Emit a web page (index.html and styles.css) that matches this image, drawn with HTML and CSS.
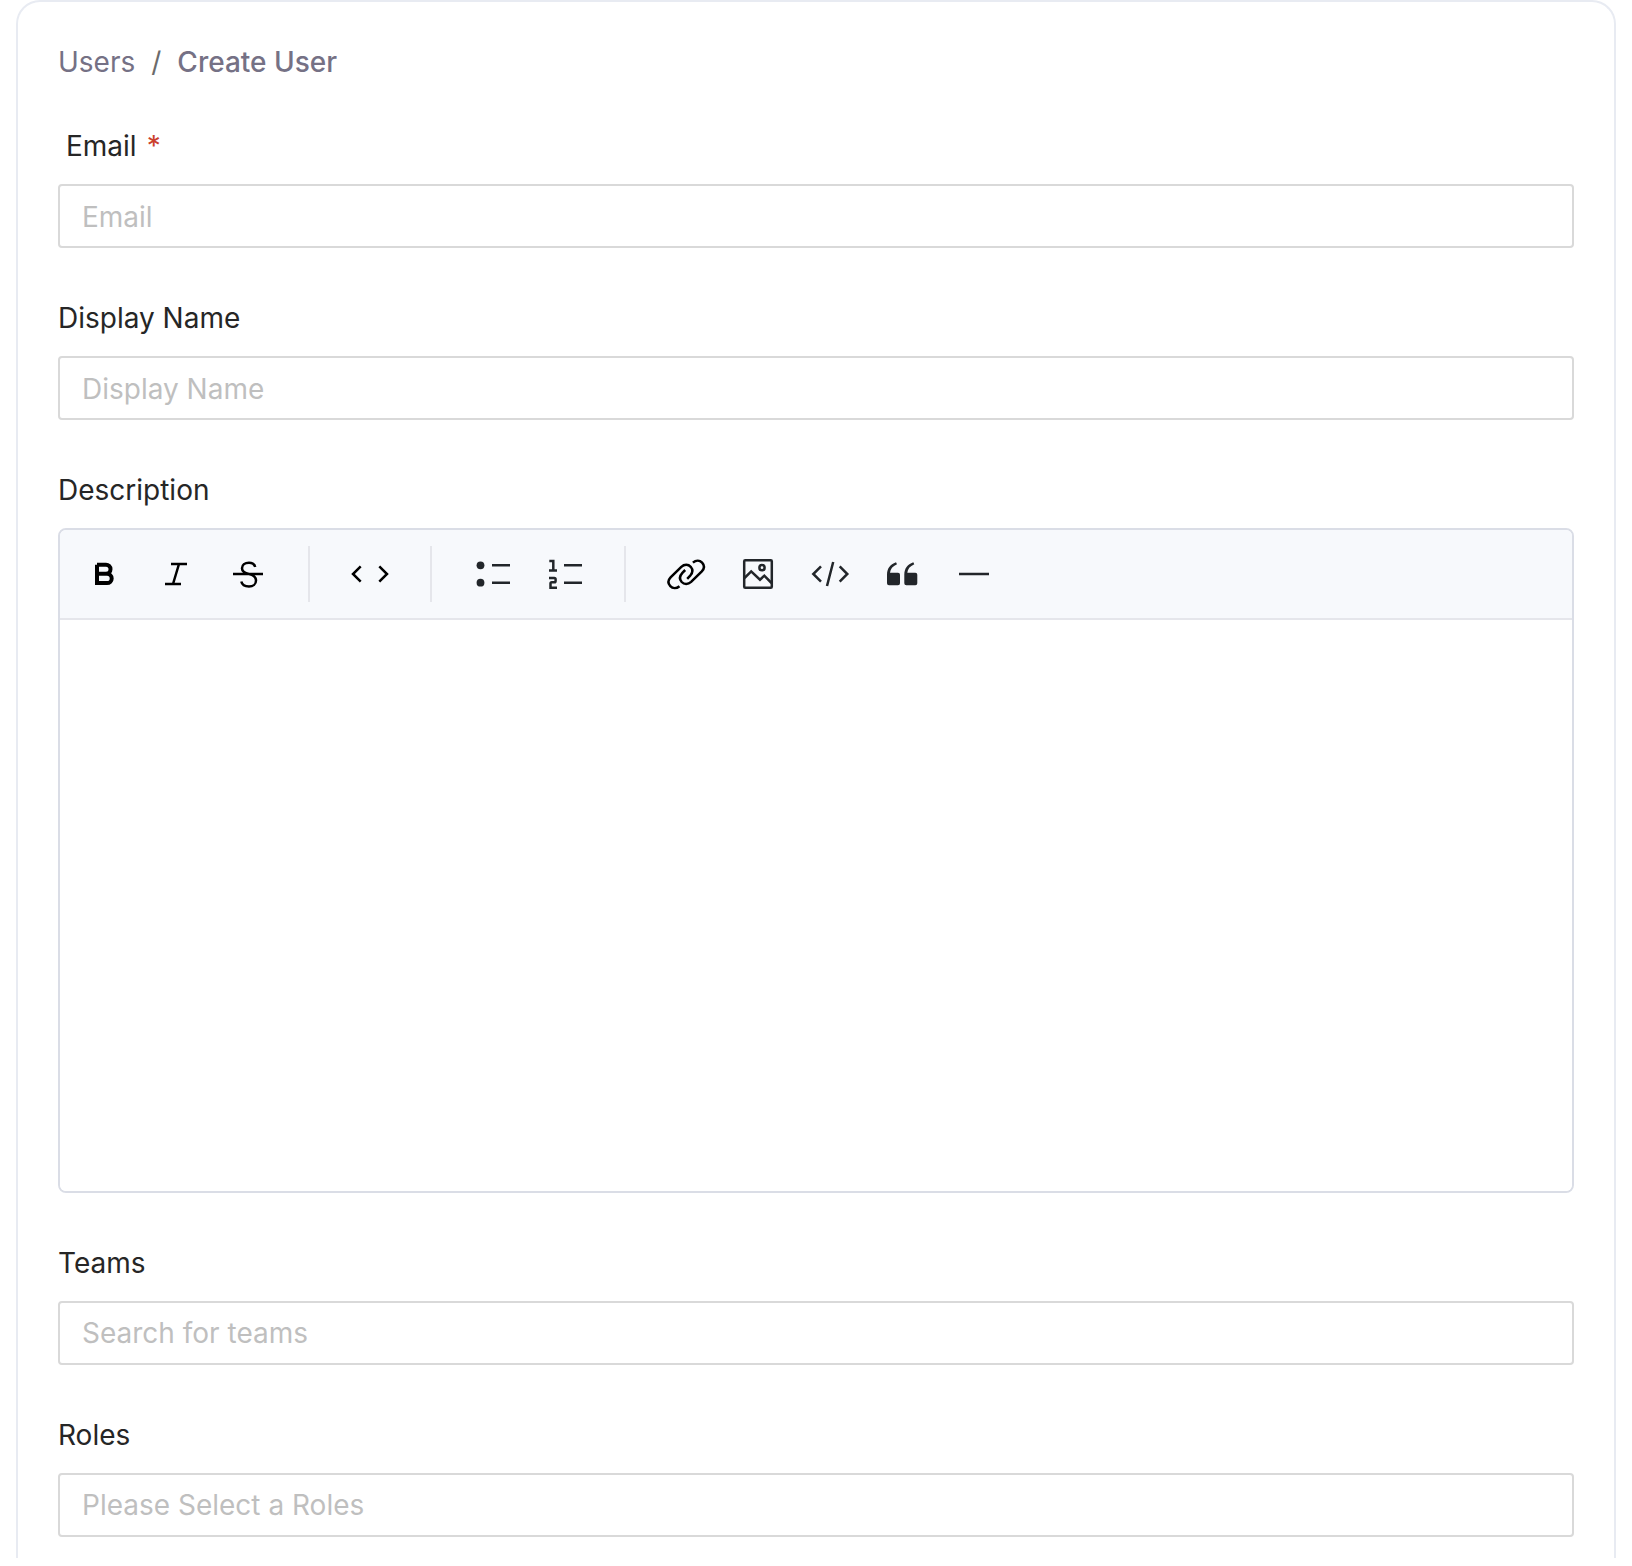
FILE: index.html
```html
<!DOCTYPE html>
<html lang="en">
<head>
<meta charset="utf-8">
<meta name="viewport" content="width=device-width, initial-scale=1">
<title>Create User</title>
<link rel="stylesheet" href="styles.css">
</head>
<body>
<main class="card">
  <nav class="breadcrumb" aria-label="Breadcrumb">
    <a class="breadcrumb-link" href="#users">Users</a>
    <span class="breadcrumb-separator">/</span>
    <span class="breadcrumb-current" aria-current="page">Create User</span>
  </nav>
  <form class="form">
    <div class="field">
      <label class="label label-required" for="email">Email<span class="required-mark">*</span></label>
      <input class="input input-text" id="email" type="email" placeholder="Email" required>
    </div>
    <div class="field">
      <label class="label" for="display-name">Display Name</label>
      <input class="input input-text" id="display-name" type="text" placeholder="Display Name">
    </div>
    <div class="field">
      <label class="label" for="description">Description</label>
      <div class="editor">
        <div class="toolbar" role="toolbar" aria-label="Formatting">
          <button class="tool" type="button" aria-label="Bold">
            <svg class="icon icon-strong" viewBox="0 0 64 64"><path stroke-width="4" d="M25 22.7H34a4.5 4.5 0 0 1 0 9H25M25 31.7H35a4.7 4.7 0 0 1 0 9.4H25V22.7" class="bold-stroke"/></svg>
          </button>
          <button class="tool" type="button" aria-label="Italic">
            <svg class="icon icon-strong" viewBox="0 0 64 64"><path d="M27 22H43M21 42H37M35 22L29 42"/></svg>
          </button>
          <button class="tool" type="button" aria-label="Strike">
            <svg class="icon icon-strong" viewBox="0 0 64 64"><path d="M17 32H47M39.2 25C38.5 22.3 36 20.7 33 20.7C28.8 20.7 26 23 26 26.2C26 29.5 29 31 33 32C38 33.2 40 35.2 40 38.4C40 42 37 44.5 33 44.5C29 44.5 26 42.7 25.3 39.5"/></svg>
          </button>
          <span class="divider"></span>
          <button class="tool" type="button" aria-label="Inline code">
            <svg class="icon icon-strong" viewBox="0 0 64 64"><path d="M22.7 24.3L15 32l7.7 7.7M41.3 24.3L49 32l-7.7 7.7"/></svg>
          </button>
          <span class="divider"></span>
          <button class="tool" type="button" aria-label="Unordered list">
            <svg class="icon" viewBox="0 0 64 64"><path d="M32 23.3H50M32 40.7H50"/><circle class="solid" cx="20.5" cy="23.3" r="3.9"/><circle class="solid" cx="20.5" cy="40.7" r="3.9"/></svg>
          </button>
          <button class="tool" type="button" aria-label="Ordered list">
            <svg class="icon" viewBox="0 0 64 64"><path d="M32 23.3H50M32 40.7H50M17.3 19H21.3V28.5M17 28.5H25M17 36H22.3q1.3 0 1.3 1.3V39q0 1.3-1.3 1.3h-2.5q-1.3 0-1.3 1.3V45.8H25"/></svg>
          </button>
          <span class="divider"></span>
          <button class="tool" type="button" aria-label="Insert link">
            <svg class="icon icon-strong" viewBox="0 0 64 64"><path id="link-half" d="M25.5 44.2C22.4 46.8 18.6 46.6 16.3 44.2C13.9 41.6 14 38.2 16.6 35.4L27.3 24.9C30.4 22 34.3 22.2 36.7 24.8C39.1 27.6 38.6 31.2 36 34L33.2 36.8"/><use href="#link-half" transform="rotate(180 32.2 32.4)"/></svg>
          </button>
          <button class="tool" type="button" aria-label="Insert image">
            <svg class="icon" viewBox="0 0 64 64"><rect x="18.2" y="18.2" width="27.6" height="27.6" rx="1"/><circle cx="36" cy="25.7" r="2.6"/><path d="M18.5 36L25.2 29.4L34 37.7L38.3 33.7L45.5 41"/></svg>
          </button>
          <button class="tool" type="button" aria-label="Insert code block">
            <svg class="icon" viewBox="0 0 64 64"><path d="M23 24.3L15.3 32l7.7 7.7M41.7 24.3L49.3 32l-7.6 7.7M35.2 20L29 44"/></svg>
          </button>
          <button class="tool" type="button" aria-label="Blockquote">
            <svg class="icon" viewBox="0 0 64 64"><path id="quote-mark" class="solid" d="M26 20.2L27 22.2C22.5 24.2 20.4 27 20 30.7H28a2 2 0 0 1 2 2V41.3a2 2 0 0 1-2 2H19a2 2 0 0 1-2-2V32.4C17 26.6 20 22.4 26 20.2Z"/><use href="#quote-mark" x="17.3"/></svg>
          </button>
          <button class="tool" type="button" aria-label="Horizontal line">
            <svg class="icon" viewBox="0 0 64 64"><path d="M17 32H47"/></svg>
          </button>
        </div>
        <textarea class="editor-text" id="description"></textarea>
      </div>
    </div>
    <div class="field">
      <label class="label" for="teams">Teams</label>
      <input class="input" id="teams" type="text" placeholder="Search for teams">
    </div>
    <div class="field">
      <label class="label" for="roles">Roles</label>
      <input class="input" id="roles" type="text" placeholder="Please Select a Roles">
    </div>
  </form>
</main>
</body>
</html>
```
FILE: styles.css
```css
* {
  box-sizing: border-box;
}

body {
  margin: 0;
  padding: 0 16px 8px;
  background: #fff;
  color: #262626;
  font: 400 28px/44px Inter, "Liberation Sans", sans-serif;
}

.card {
  padding: 40px 40px 21px;
  border: 2px solid #e8ebf2;
  border-bottom: 0;
  border-radius: 24px 24px 0 0;
}

.breadcrumb {
  display: flex;
  gap: 16px;
  margin-bottom: 42px;
  line-height: 40px;
  color: #757185;
}

.breadcrumb-link {
  color: inherit;
  text-decoration: none;
}

.breadcrumb-separator {
  color: #6b6b6b;
}

.breadcrumb-current {
  font-weight: 500;
}

.form {
  display: flex;
  flex-direction: column;
  gap: 48px;
}

.field {
  display: flex;
  flex-direction: column;
  gap: 16px;
}

.label-required {
  padding-left: 8px;
}

.required-mark {
  margin-left: 10px;
  color: #cb402d;
}

.input {
  width: 100%;
  height: 64px;
  padding: 0 22px;
  border: 2px solid #d9d9d9;
  border-radius: 4px;
  background: #fff;
  color: inherit;
  font: inherit;
}

.input-text {
  padding-top: 2px;
}

.input::placeholder {
  color: #bfbfbf;
  opacity: 1;
}

.editor {
  border: 2px solid #dadde6;
  border-radius: 8px;
  overflow: hidden;
}

.toolbar {
  display: flex;
  align-items: center;
  gap: 8px;
  padding: 12px;
  border-bottom: 2px solid #e5e6eb;
  background: #f7f9fc;
}

.tool {
  width: 64px;
  height: 64px;
  padding: 0;
  border: 0;
  background: none;
  color: #22262a;
}

.icon {
  display: block;
  width: 64px;
  height: 64px;
  fill: none;
  stroke: currentColor;
  stroke-width: 2.5;
}

.icon-strong {
  color: #000;
}

.solid {
  fill: currentColor;
  stroke: none;
}

.divider {
  width: 2px;
  height: 56px;
  margin: 0 20px;
  background: #e5e6eb;
}

.editor-text {
  display: block;
  width: 100%;
  height: 571px;
  padding: 24px;
  border: 0;
  resize: none;
  background: #fff;
  color: inherit;
  font: inherit;
}
```
